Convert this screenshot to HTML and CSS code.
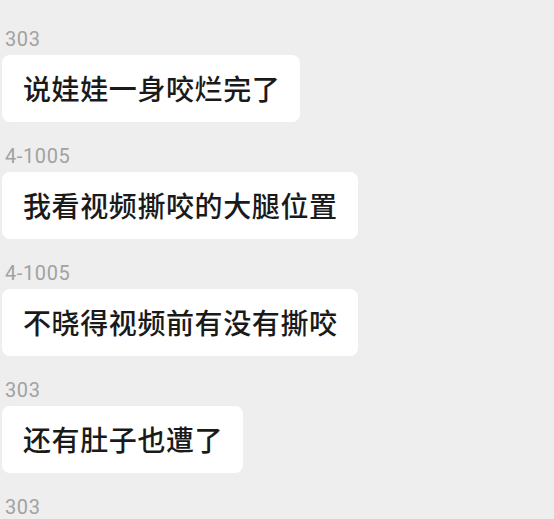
FILE: index.html
```html
<!DOCTYPE html>
<html lang="zh-CN">
<head>
    <meta charset="UTF-8">
    <meta name="viewport" content="width=device-width, initial-scale=1.0">
    <title>聊天记录</title>
    <link rel="stylesheet" href="styles.css">
</head>
<body>

<div class="chat">
    <div class="msg">
        <div class="name">303</div>
        <div class="bubble">说娃娃一身咬烂完了</div>
    </div>

    <div class="msg">
        <div class="name">4-1005</div>
        <div class="bubble">我看视频撕咬的大腿位置</div>
    </div>

    <div class="msg">
        <div class="name">4-1005</div>
        <div class="bubble">不晓得视频前有没有撕咬</div>
    </div>

    <div class="msg">
        <div class="name">303</div>
        <div class="bubble">还有肚子也遭了</div>
    </div>

    <div class="msg">
        <div class="name">303</div>
    </div>
</div>

</body>
</html>
```

FILE: styles.css
```css
body {
    margin: 0;
    background: #eeeeee;
    font-family: "Noto Sans CJK SC", "Noto Sans", sans-serif;
    overflow: hidden;
}
.chat {
    padding: 28px 0 0 2px;
}
.msg {
    display: flex;
    flex-direction: column;
    align-items: flex-start;
    margin-bottom: 23px;
}
.name {
    font-family: Roboto, "Noto Sans", sans-serif;
    font-size: 20px;
    line-height: 22px;
    letter-spacing: 0.6px;
    color: #a2a2a2;
    padding-left: 3px;
    margin-bottom: 5px;
}
.bubble {
    background: #ffffff;
    color: #1a1a1a;
    font-size: 28px;
    font-weight: 500;
    line-height: 35px;
    letter-spacing: 0.6px;
    padding: 16px 20px 16px 21px;
    border-radius: 8px;
}
```
